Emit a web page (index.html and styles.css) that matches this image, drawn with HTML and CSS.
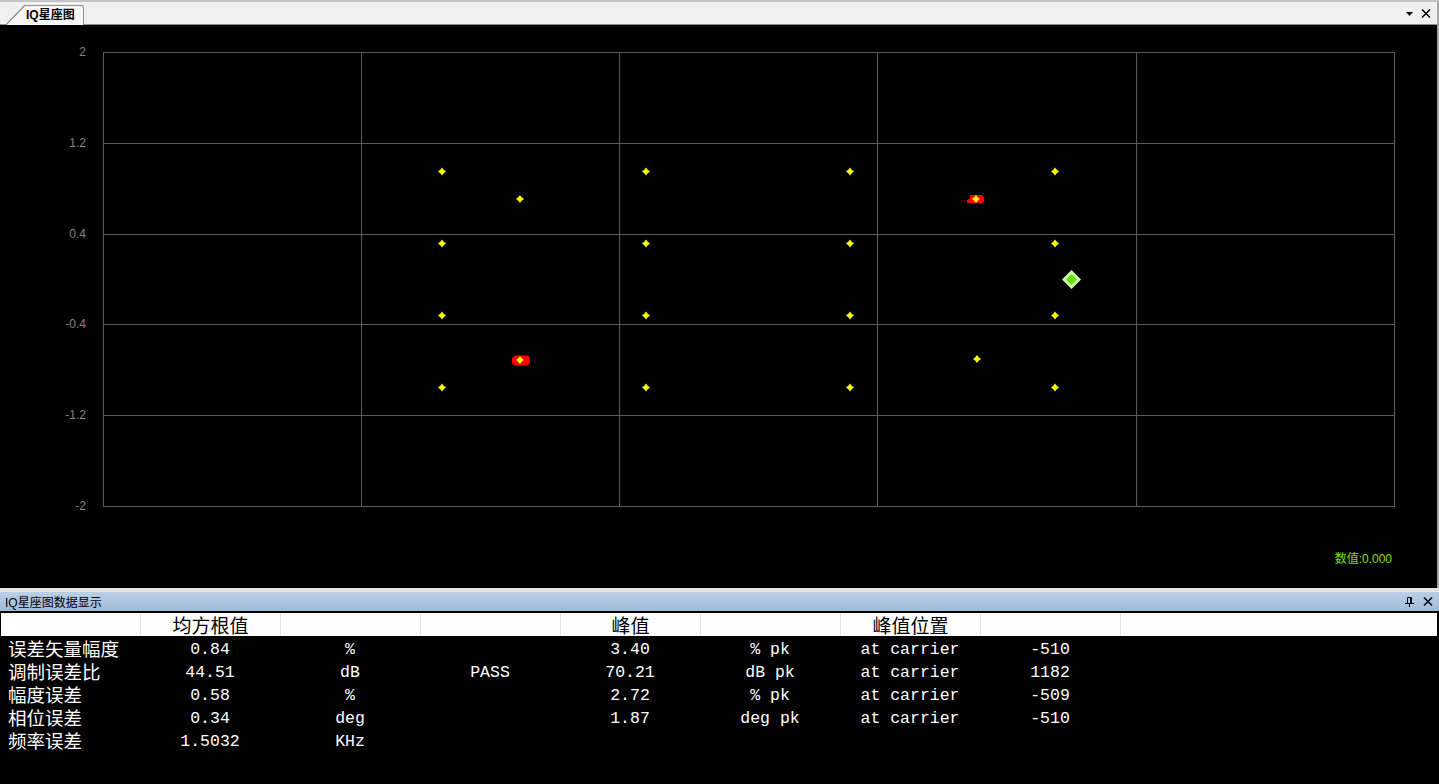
FILE: index.html
```html
<!DOCTYPE html>
<html lang="zh-CN">
<head>
<meta charset="utf-8">
<title>IQ星座图</title>
<link rel="stylesheet" href="styles.css">
</head>
<body>
<div class="app">
  <div class="tabbar">
    <div class="tab">IQ星座图</div>
    <div class="tools">
      <svg class="ico" width="7" height="4" viewBox="0 0 7 4"><path d="M0 0H7L3.5 4Z" fill="#000"/></svg>
      <svg class="ico" width="10" height="9" viewBox="0 0 10 9"><path d="M1 0.5L9 8.5M9 0.5L1 8.5" stroke="#000" stroke-width="1.5"/></svg>
    </div>
  </div>
  <div class="plot">
    <svg class="chart" width="1437" height="563" viewBox="0 0 1437 563">
      <defs>
        <path id="st" d="M0 -4L1.7 -1.7L4 0L1.7 1.7L0 4L-1.7 1.7L-4 0L-1.7 -1.7Z" fill="#ffff00"/>
      </defs>
      <g stroke="#5c5c5c" stroke-width="1" fill="none">
        <rect x="103.5" y="27.5" width="1291" height="454"/>
        <path d="M361.5 27.5V481.5M619.5 27.5V481.5M877.5 27.5V481.5M1136.5 27.5V481.5"/>
        <path d="M103.5 118.5H1394.5M103.5 209.5H1394.5M103.5 299.5H1394.5M103.5 390.5H1394.5"/>
      </g>
      <g class="axis" text-anchor="end">
        <text x="86" y="31">2</text>
        <text x="86" y="122">1.2</text>
        <text x="86" y="213">0.4</text>
        <text x="86" y="303">-0.4</text>
        <text x="86" y="394">-1.2</text>
        <text x="86" y="485">-2</text>
      </g>
      <g fill="#ff0000">
        <path d="M970 170H982L984 172V176L982 178H967V175L970 173Z"/>
        <path d="M515 330.5H528L530 333V338L528 340.5H514L512 338V333Z"/>
      </g>
      <g>
        <use href="#st" x="442" y="146.5"/><use href="#st" x="646" y="146.5"/><use href="#st" x="850" y="146.5"/><use href="#st" x="1055" y="146.5"/>
        <use href="#st" x="520" y="174"/><use href="#st" x="976" y="174"/>
        <use href="#st" x="442" y="218.5"/><use href="#st" x="646" y="218.5"/><use href="#st" x="850" y="218.5"/><use href="#st" x="1055" y="218.5"/>
        <use href="#st" x="442" y="290.5"/><use href="#st" x="646" y="290.5"/><use href="#st" x="850" y="290.5"/><use href="#st" x="1055" y="290.5"/>
        <use href="#st" x="520" y="335"/><use href="#st" x="977" y="334"/>
        <use href="#st" x="442" y="362.5"/><use href="#st" x="646" y="362.5"/><use href="#st" x="850" y="362.5"/><use href="#st" x="1055" y="362.5"/>
      </g>
      <path d="M1071.5 245L1081 254.5L1071.5 264L1062 254.5Z" fill="#ccffaa"/>
      <path d="M1071.5 249L1077 254.5L1071.5 260L1066 254.5Z" fill="#66e000"/>
      <text class="val" x="1392" y="538" text-anchor="end">数值:0.000</text>
    </svg>
  </div>
  <div class="splitter"></div>
  <div class="panel">
    <div class="ptitle">
      <span>IQ星座图数据显示</span>
      <div class="tools">
        <svg class="ico" width="9" height="10" viewBox="0 0 9 10"><path d="M2.5 0.5H6.5V6M2.5 0.5V6M5.5 0.5V6M0 6.5H9M4.5 6.5V10" stroke="#000" stroke-width="1" fill="none"/></svg>
        <svg class="ico" width="10" height="9" viewBox="0 0 10 9"><path d="M1 0.5L9 8.5M9 0.5L1 8.5" stroke="#000" stroke-width="1.5"/></svg>
      </div>
    </div>
    <div class="table">
      <div class="thead">
        <div class="hc"></div>
        <div class="hc cj">均方根值</div>
        <div class="hc"></div>
        <div class="hc"></div>
        <div class="hc cj">峰值</div>
        <div class="hc"></div>
        <div class="hc cj">峰值位置</div>
        <div class="hc"></div>
        <div class="hc last"></div>
      </div>
      <div class="tbody">
        <div class="row">
          <div class="c name">误差矢量幅度</div><div class="c">0.84</div><div class="c">%</div><div class="c"></div><div class="c">3.40</div><div class="c">% pk</div><div class="c">at carrier</div><div class="c">-510</div>
        </div>
        <div class="row">
          <div class="c name">调制误差比</div><div class="c">44.51</div><div class="c">dB</div><div class="c">PASS</div><div class="c">70.21</div><div class="c">dB pk</div><div class="c">at carrier</div><div class="c">1182</div>
        </div>
        <div class="row">
          <div class="c name">幅度误差</div><div class="c">0.58</div><div class="c">%</div><div class="c"></div><div class="c">2.72</div><div class="c">% pk</div><div class="c">at carrier</div><div class="c">-509</div>
        </div>
        <div class="row">
          <div class="c name">相位误差</div><div class="c">0.34</div><div class="c">deg</div><div class="c"></div><div class="c">1.87</div><div class="c">deg pk</div><div class="c">at carrier</div><div class="c">-510</div>
        </div>
        <div class="row">
          <div class="c name">频率误差</div><div class="c">1.5032</div><div class="c">KHz</div><div class="c"></div><div class="c"></div><div class="c"></div><div class="c"></div><div class="c"></div>
        </div>
      </div>
    </div>
  </div>
</div>
</body>
</html>
```
FILE: styles.css
```css
* { box-sizing: border-box; }
html, body { margin: 0; padding: 0; }
body {
  width: 1439px;
  height: 784px;
  overflow: hidden;
  background: #000;
  font-family: "Liberation Sans", "Noto Sans CJK SC", sans-serif;
}
.app {
  width: 1439px;
  height: 784px;
  display: flex;
  flex-direction: column;
}
.tabbar {
  height: 25px;
  flex: none;
  display: flex;
  align-items: flex-end;
  background: #f0f0f0;
  border-top: 2px solid #c4c4c4;
  border-bottom: 1px solid #8c8c8c;
  border-right: 2px solid #a8a8a8;
}
.tab {
  position: relative;
  margin-left: 25px;
  margin-bottom: -1px;
  height: 20px;
  padding: 0 8px 0 1px;
  background: #f7f7f7;
  border-top: 1px solid #8c8c8c;
  border-right: 1px solid #8c8c8c;
  border-top-right-radius: 3px;
  font-size: 12px;
  font-weight: bold;
  line-height: 19px;
  color: #000;
}
.tab::before {
  content: "";
  position: absolute;
  left: -19px;
  top: -1px;
  width: 19px;
  height: 20px;
  background: linear-gradient(to top left, #f7f7f7 calc(50% - 0.9px), #8c8c8c calc(50% - 0.4px), #8c8c8c calc(50% + 0.4px), transparent calc(50% + 0.9px));
}
.tools {
  margin-left: auto;
  display: flex;
  align-items: center;
  gap: 8px;
  align-self: center;
}
.tabbar .tools { padding-right: 6px; padding-top: 1px; }
.ico { display: block; }
.plot {
  height: 563px;
  flex: none;
  background: #000;
  border-right: 2px solid #a8a8a8;
}
.chart { display: block; }
.axis text {
  font-family: "Liberation Sans", sans-serif;
  font-size: 12px;
  fill: #858585;
}
.val {
  font-family: "Liberation Sans", "Noto Sans CJK SC", sans-serif;
  font-size: 12px;
  fill: #7ee000;
}
.splitter {
  height: 4px;
  flex: none;
  background: #e4e4e4;
}
.panel {
  flex: 1;
  display: flex;
  flex-direction: column;
  background: #000;
}
.ptitle {
  height: 19px;
  flex: none;
  display: flex;
  align-items: center;
  padding: 0 6px 0 5px;
  background: linear-gradient(#bbd0e6, #9fbad8);
  font-size: 12px;
  color: #000;
}
.ptitle .tools { gap: 9px; }
.table {
  flex: 1;
  border-top: 2px solid #000;
  background: #000;
}
.thead {
  height: 23px;
  display: grid;
  grid-template-columns: repeat(8, 140px) 1fr;
  background: #fff;
  margin: 0 2px 0 1px;
}
.hc {
  border-right: 1px solid #e2e2e2;
  text-align: center;
  line-height: 23px;
  font-size: 19px;
  color: #000;
}
.hc.last { border-right: none; }
.cj { font-family: "Noto Sans CJK SC", sans-serif; }
.tbody { padding-top: 1px; }
.row {
  height: 23px;
  display: grid;
  grid-template-columns: repeat(8, 140px) 1fr;
  grid-template-rows: 23px;
}
.c {
  height: 23px;
  padding-top: 3px;
  line-height: 20px;
  text-align: center;
  color: #fff;
  font-family: "Liberation Mono", monospace;
  font-size: 16.5px;
  white-space: pre;
}
.c.name {
  padding-top: 0;
  line-height: 23px;
  text-align: left;
  padding-left: 8px;
  font-family: "Noto Sans CJK SC", sans-serif;
  font-size: 18.5px;
}
```
